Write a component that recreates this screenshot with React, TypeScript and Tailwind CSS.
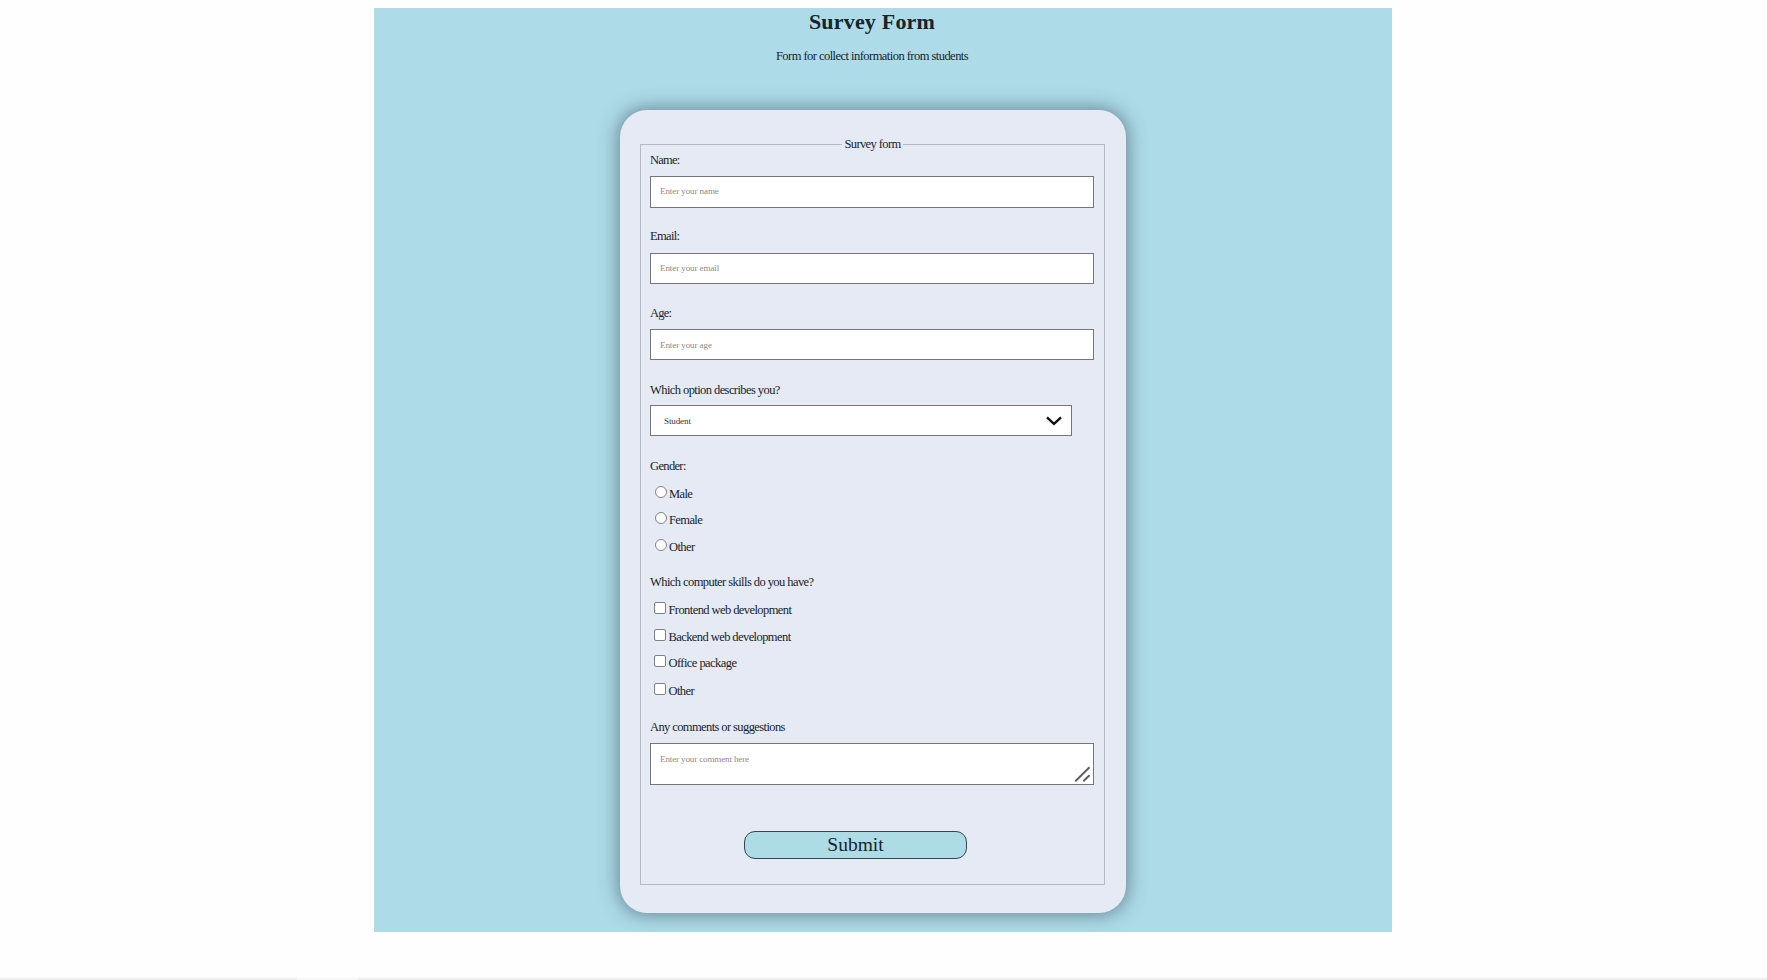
import React from "react";

const label = "block h-4 text-[12.5px] leading-4 whitespace-nowrap";
const field =
  "block w-[444px] border border-[#767676] bg-white pl-[9px] text-[9px] text-[#222] outline-none placeholder:text-[#8a8a8a] placeholder:opacity-100";

function Label({ text, className }: { text: string; className: string }) {
  return <span className={`${label} ${className}`}>{text}</span>;
}

function Choice({
  type,
  name,
  text,
  className,
}: {
  type: "radio" | "checkbox";
  name: string;
  text: string;
  className: string;
}) {
  const shape = type === "radio" ? "rounded-full ml-[4.5px] mr-[2.5px]" : "rounded-[2px] ml-1 mr-[2.5px]";
  return (
    <label className={`flex ${label} ${className}`}>
      <input
        type={type}
        name={name}
        className={`h-3 w-3 shrink-0 appearance-none border border-[#7f8285] bg-white ${shape}`}
      />
      <span>{text}</span>
    </label>
  );
}

export default function App() {
  return (
    <div className="flex h-[980px] w-full flex-col justify-between overflow-hidden bg-[#fefefe] pt-2 font-['Liberation_Serif',serif] text-[#17242c]">
      <main className="ml-[374px] h-[924px] w-[1018px] overflow-hidden bg-[#addbe7]">
        <header className="flex h-[102px] w-[996px] flex-col items-center">
          <h1 className="h-7 text-[22px] leading-7 font-bold tracking-[0.2px]">Survey Form</h1>
          <p className="mt-3 h-4 text-[12.5px] leading-4 tracking-[-0.54px]">
            Form for collect information from students
          </p>
        </header>
        <form
          className="ml-[246px] h-[803px] w-[506px] rounded-[27px] bg-[#e5eaf5] pt-[26px] pl-5 shadow-[0_0_18px_2px_rgba(70,95,110,0.68)]"
          onSubmit={(e) => e.preventDefault()}
        >
          <fieldset className="h-[749px] w-[465px] border border-[#b3bac4] px-[9px]">
            <legend className="mx-auto h-[17px] px-[2px] text-[12.5px] leading-[17px] tracking-[-0.6px]">
              Survey form
            </legend>
            <Label text="Name:" className="-mt-px tracking-[-0.8px]" />
            <input className={`${field} mt-2 h-8 pb-[2px] tracking-[-0.08px]`} placeholder="Enter your name" />
            <Label text="Email:" className="mt-5 tracking-[-0.65px]" />
            <input className={`${field} mt-[9px] h-[31px] pb-[2px] tracking-[-0.08px]`} placeholder="Enter your email" />
            <Label text="Age:" className="mt-[21px] tracking-[-0.8px]" />
            <input className={`${field} mt-2 h-[31px] tracking-[-0.08px]`} placeholder="Enter your age" />
            <Label text="Which option describes you?" className="mt-[22px] tracking-[-0.58px]" />
            <div className="mt-[7px] flex h-[31px] w-[422px] items-center justify-between border border-[#767676] bg-white pr-[9px] pl-[13px]">
              <span className="text-[9px] leading-4 tracking-[-0.1px] text-[#333]">Student</span>
              <svg width="17" height="11" viewBox="0 0 17 11" fill="none" stroke="#111" strokeWidth="2.4">
                <path d="M2 2.3 L9 8.8 L16 2.3" />
              </svg>
            </div>
            <Label text="Gender:" className="mt-[22px] tracking-[-0.65px]" />
            <Choice type="radio" name="gender" text="Male" className="mt-3 tracking-[-0.6px]" />
            <Choice type="radio" name="gender" text="Female" className="mt-[10px] tracking-[-0.6px]" />
            <Choice type="radio" name="gender" text="Other" className="mt-[11px] tracking-[-0.6px]" />
            <Label text="Which computer skills do you have?" className="mt-[19px] tracking-[-0.57px]" />
            <Choice type="checkbox" name="frontend" text="Frontend web development" className="mt-3 tracking-[-0.58px]" />
            <Choice type="checkbox" name="backend" text="Backend web development" className="mt-[11px] tracking-[-0.58px]" />
            <Choice type="checkbox" name="office" text="Office package" className="mt-[10px] tracking-[-0.56px]" />
            <Choice type="checkbox" name="other" text="Other" className="mt-3 tracking-[-0.6px]" />
            <Label text="Any comments or suggestions" className="mt-5 tracking-[-0.6px]" />
            <div className="relative mt-2 h-[42px] w-[444px]">
              <textarea
                className={`${field} h-[42px] resize-none overflow-hidden pt-[9px] leading-3 tracking-[-0.12px]`}
                placeholder="Enter your comment here"
              />
              <svg
                className="absolute right-[3px] bottom-[2px]"
                width="17"
                height="17"
                viewBox="0 0 17 17"
                stroke="#5c5c60"
                strokeWidth="1.9"
              >
                <path d="M1.3 15.3 L15.5 1.3 M9.3 15.3 L15.5 9.2" />
              </svg>
            </div>
            <button
              type="submit"
              className="mt-[46px] ml-[94px] flex h-7 w-[223px] items-center justify-center rounded-[11px] border-[1.5px] border-[#33474f] bg-[#addbe6] text-[19.5px] leading-6"
            >
              Submit
            </button>
          </fieldset>
        </form>
      </main>
      <footer className="flex h-[2px] w-full bg-[#eeeeee] pl-[297px]">
        <div className="h-[2px] w-[61px] bg-[#f8f8f8]" />
      </footer>
    </div>
  );
}
